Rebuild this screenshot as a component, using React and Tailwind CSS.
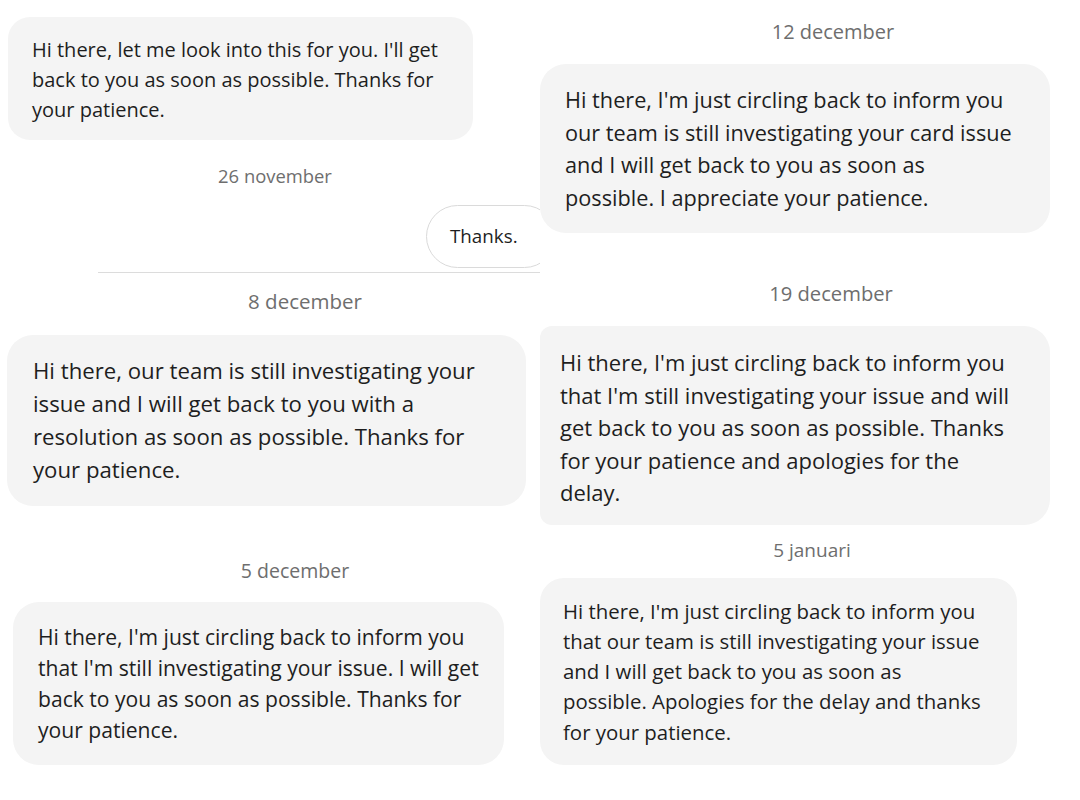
const FONT = "font-['Open_Sans',_'Noto_Sans',_sans-serif]";

function DateLabel({ text, className }) {
  return <div className={`text-center text-[#6e6e6e] ${className}`}>{text}</div>;
}

function Bubble({ lines, className, lineClass }) {
  return (
    <div className={`bg-[#f4f4f4] text-[#1e1e1e] ${className}`}>
      {lines.map((l, i) => (
        <div key={i} className={`whitespace-nowrap ${lineClass}`}>{l}</div>
      ))}
    </div>
  );
}

export default function App() {
  return (
    <div className={`w-[1080px] h-[800px] bg-white flex overflow-hidden ${FONT}`}>
      {/* left column */}
      <div className="w-[540px] shrink-0 flex flex-col overflow-hidden pt-[17px]">
        <Bubble
          className="ml-[8px] w-[465px] rounded-[22px] pl-[24px] pt-[18px] pb-[15px]"
          lineClass="text-[20px] leading-[30px]"
          lines={[
            "Hi there, let me look into this for you. I'll get",
            "back to you as soon as possible. Thanks for",
            "your patience.",
          ]}
        />
        <DateLabel text="26 november" className="mt-[26px] pl-[10px] text-[18.4px] leading-[20px]" />
        <div className="mt-[19px] ml-[426px] w-[130px] h-[63px] rounded-full border border-[#dadada] bg-white flex items-center pl-[23px] text-[18.8px] text-[#1e1e1e] shrink-0">
          Thanks.
        </div>
        <div className="mt-[4px] ml-[98px] h-px bg-[#dcdcdc] shrink-0" />
        <DateLabel text="8 december" className="mt-[16px] pl-[70px] text-[20.5px] leading-[24px]" />
        <Bubble
          className="mt-[22px] ml-[7px] w-[519px] rounded-[26px] pl-[26px] pt-[19px] pb-[20px]"
          lineClass="text-[22.2px] leading-[33px]"
          lines={[
            "Hi there, our team is still investigating your",
            "issue and I will get back to you with a",
            "resolution as soon as possible. Thanks for",
            "your patience.",
          ]}
        />
        <DateLabel text="5 december" className="mt-[53px] pl-[50px] text-[19.5px] leading-[24px]" />
        <Bubble
          className="mt-[19px] ml-[13px] w-[491px] rounded-[26px] pl-[25px] pt-[19px] pb-[20px]"
          lineClass="text-[21.1px] leading-[31px]"
          lines={[
            "Hi there, I'm just circling back to inform you",
            "that I'm still investigating your issue. I will get",
            "back to you as soon as possible. Thanks for",
            "your patience.",
          ]}
        />
      </div>

      {/* right column */}
      <div className="w-[540px] shrink-0 flex flex-col pt-[20px]">
        <DateLabel text="12 december" className="pl-[46px] text-[20px] leading-[24px]" />
        <Bubble
          className="mt-[20px] w-[510px] rounded-[26px] pl-[25px] pt-[20px] pb-[19px]"
          lineClass="text-[21.7px] leading-[32.5px]"
          lines={[
            "Hi there, I'm just circling back to inform you",
            "our team is still investigating your card issue",
            "and I will get back to you as soon as",
            "possible. I appreciate your patience.",
          ]}
        />
        <DateLabel text="19 december" className="mt-[48px] pl-[42px] text-[20.2px] leading-[24px]" />
        <Bubble
          className="mt-[21px] w-[510px] rounded-r-[26px] rounded-l-[12px] pl-[20px] pt-[20px] pb-[16px]"
          lineClass="text-[22px] leading-[32.5px]"
          lines={[
            "Hi there, I'm just circling back to inform you",
            "that I'm still investigating your issue and will",
            "get back to you as soon as possible. Thanks",
            "for your patience and apologies for the",
            "delay.",
          ]}
        />
        <DateLabel text="5 januari" className="mt-[15px] pl-[4px] text-[19px] leading-[20px]" />
        <Bubble
          className="mt-[18px] w-[477px] rounded-[24px] pl-[23px] pt-[18px] pb-[18px]"
          lineClass="text-[20.4px] leading-[30.25px]"
          lines={[
            "Hi there, I'm just circling back to inform you",
            "that our team is still investigating your issue",
            "and I will get back to you as soon as",
            "possible. Apologies for the delay and thanks",
            "for your patience.",
          ]}
        />
      </div>
    </div>
  );
}
